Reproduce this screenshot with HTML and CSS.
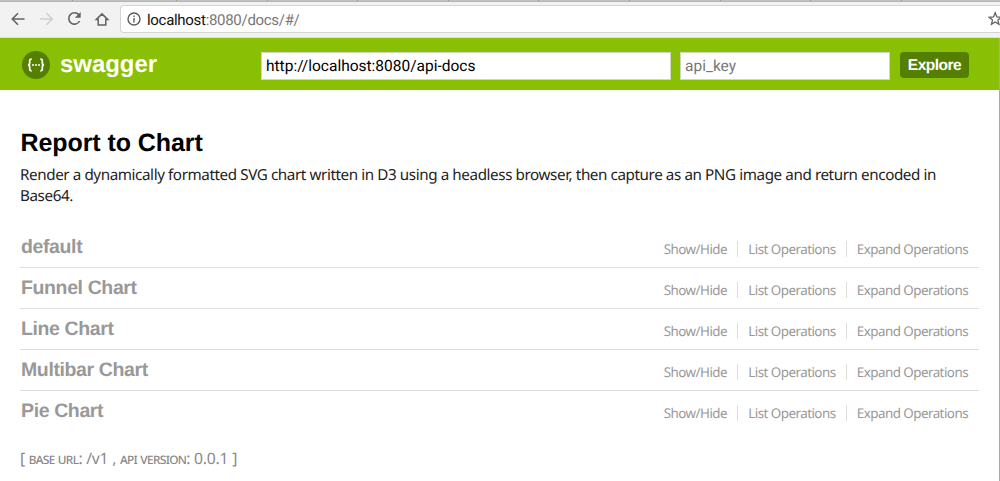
FILE: index.html
```html
<!DOCTYPE html>
<html lang="en">
<head>
<meta charset="utf-8">
<title>Swagger UI</title>
<link rel="stylesheet" href="styles.css">
</head>
<body>
<div class="tabstrip"><i class="wide"></i><i></i><i></i><i></i><i></i><i></i><i></i><i></i><i></i><i></i></div>
<div class="toolbar">
  <svg class="nav" width="120" height="33" viewBox="0 0 120 33" fill="none" stroke="#636363" stroke-width="1.6">
    <path d="M24.5 14H12.5M18 8.2L12.3 14L18 19.8"/>
    <path stroke="#cfcfcf" d="M40 14H52M46.5 8.2L52.2 14L46.5 19.8"/>
    <path d="M79.2 10.2A5.7 5.7 0 1 0 79.6 16" />
    <path d="M80.7 7V12.8H74.9Z" fill="#636363" stroke="none"/>
    <path d="M96.2 14.6L102 8.9L107.8 14.6H105.8V20.1H98.2V14.6Z" stroke-width="1.5"/>
  </svg>
  <div class="address">
    <svg width="14" height="14" viewBox="0 0 14 14" fill="none" stroke="#5c5c5c" stroke-width="1.4"><circle cx="7" cy="7" r="6"/><path d="M7 6V10.4M7 3.4V5"/></svg>
    <span class="url">localhost<span class="path">:8080/docs/#/</span></span>
    <svg class="star" width="12" height="16" viewBox="0 0 12 16" fill="none" stroke="#636363" stroke-width="1.3"><path d="M7.2 1.8L8.9 6L13.3 6.3L9.9 9.1L11 13.4L7.2 11L3.4 13.4L4.5 9.1L1.1 6.3L5.5 6Z"/></svg>
  </div>
</div>
<div class="page">
  <header class="header">
    <div class="logo">
      <svg width="28" height="28" viewBox="0 0 28 28"><circle cx="14" cy="14" r="14" fill="#547f00"/><path d="M9.7 8.2H9.3Q7.7 8.2 7.7 9.8V12Q7.7 14 5.9 14Q7.7 14 7.7 16V18.3Q7.7 19.9 9.3 19.9H9.7M18.3 8.2H18.7Q20.3 8.2 20.3 9.8V12Q20.3 14 22.1 14Q20.3 14 20.3 16V18.3Q20.3 19.9 18.7 19.9H18.3" fill="none" stroke="#fff" stroke-width="1.7"/><g fill="#fff"><circle cx="11" cy="14" r="1"/><circle cx="14" cy="14" r="1"/><circle cx="17" cy="14" r="1"/></g></svg>
      <span class="brand">swagger</span>
    </div>
    <form class="controls">
      <div class="field base"><span>http://localhost:8080/api-docs</span></div>
      <div class="field key"><span>api_key</span></div>
      <div class="explore">Explore</div>
    </form>
  </header>
  <main class="content">
    <h1>Report to Chart</h1>
    <p class="description"><span class="line1">Render a dynamically formatted SVG chart written in D3 using a headless browser, then capture as an PNG image and return encoded in</span><br><span>Base64.</span></p>
    <ul class="resources">
      <li><h2>default</h2><div class="ops"><a class="show">Show/Hide</a><a class="list">List Operations</a><a class="expand">Expand Operations</a></div></li>
      <li><h2>Funnel Chart</h2><div class="ops"><a class="show">Show/Hide</a><a class="list">List Operations</a><a class="expand">Expand Operations</a></div></li>
      <li><h2>Line Chart</h2><div class="ops"><a class="show">Show/Hide</a><a class="list">List Operations</a><a class="expand">Expand Operations</a></div></li>
      <li><h2>Multibar Chart</h2><div class="ops"><a class="show">Show/Hide</a><a class="list">List Operations</a><a class="expand">Expand Operations</a></div></li>
      <li><h2>Pie Chart</h2><div class="ops"><a class="show">Show/Hide</a><a class="list">List Operations</a><a class="expand">Expand Operations</a></div></li>
    </ul>
    <footer class="footer">[ <span>base url</span>: /v1 , <span>api version</span>: 0.0.1 ]</footer>
  </main>
</div>
</body>
</html>
```

FILE: styles.css
```css
* { box-sizing: border-box; }
body { margin: 0; width: 1000px; height: 481px; overflow: hidden; background: #fff; font-family: "Noto Sans", sans-serif; text-rendering: geometricPrecision; display: flex; flex-direction: column; }
.tabstrip { height: 2px; flex: none; background: #c1c1c1; border-bottom: 1px solid #b5b5b5; display: flex; padding-left: 72px; overflow: hidden; }
.tabstrip i { flex: none; width: 90.6px; height: 2px; border-left: 1px solid #999; }
.tabstrip .wide { width: 104px; }
.toolbar { height: 36px; flex: none; background: #f2f2f2; border-bottom: 1px solid #dedbe3; display: flex; padding-top: 3px; }
.nav { flex: none; }
.address { flex: none; width: 880px; height: 28px; border: 1px solid #d3d3d3; border-right: 0; background: #fff; border-radius: 4px 0 0 4px; display: flex; align-items: center; padding-left: 6px; }
.address svg { flex: none; }
.url { margin-left: 6px; font: 15px/20px Roboto, sans-serif; letter-spacing: -.3px; color: #111; flex: none; padding-top: 1px; }
.path { color: #777; }
.address .star { margin-left: auto; }
.page { flex: 1; border-right: 1px solid #aaa; }
.header { height: 52px; background: #89bf04; display: flex; padding: 0 30px 0 22px; align-items: center; }
.logo { display: flex; align-items: center; width: 238px; gap: 10px; }
.logo svg { margin-top: 2px; }
.brand { color: #fff; font: bold 24px/28px "Liberation Sans", sans-serif; letter-spacing: -.05px; padding-top: 1px; }
.controls { display: flex; gap: 10px; align-items: center; padding-top: 3px; }
.field { height: 28px; border: 1px solid #d0d8bc; background: #fff; padding-left: 4px; font: 15.5px/26px Roboto, sans-serif; color: #111; white-space: nowrap; }
.base { width: 410px; margin-left: 1px; color: #000; }
.key { width: 210px; color: #777; margin-left: -1px; }
.explore { width: 69px; height: 26px; border-radius: 4px; background: #547f00; color: #fff; font: bold 15.5px/26px "Liberation Sans", sans-serif; letter-spacing: -.5px; text-align: center; margin-top: -2px; padding-top: 1px; }
.content { padding: 36px 20px 0 21px; }
h1 { margin: 0 0 0 -.5px; font: bold 25px/34px "Liberation Sans", sans-serif; letter-spacing: -.08px; color: #000; white-space: nowrap; }
.description { margin: 5px 0 0 -1px; font-size: 15.2px; letter-spacing: -.4px; line-height: 21px; color: #222; white-space: nowrap; }
.resources { list-style: none; margin: 20px 0 0; padding: 0; }
.resources li { height: 41px; margin-left: -1px; padding: 10px 11px 0 1px; border-bottom: 1px solid #ddd; display: flex; justify-content: space-between; }
.resources li:last-child { border: 0; }
h2 { margin: 0; font: bold 19.5px/20px "Liberation Sans", sans-serif; letter-spacing: -.38px; color: #999; white-space: nowrap; }
.ops { display: flex; margin-top: 4px; height: 16px; font-size: 13.4px; letter-spacing: -.54px; line-height: 16px; color: #999; white-space: nowrap; }
.list, .expand { border-left: 1px solid #ddd; padding-left: 10px; margin-left: 10.3px; }
.footer { margin: 16px 0 0 -1px; font-size: 15.7px; letter-spacing: -.22px; line-height: 20px; color: #888; white-space: nowrap; }
.footer span { font-variant: small-caps; font-size: 14.6px; letter-spacing: -.66px; }
```
